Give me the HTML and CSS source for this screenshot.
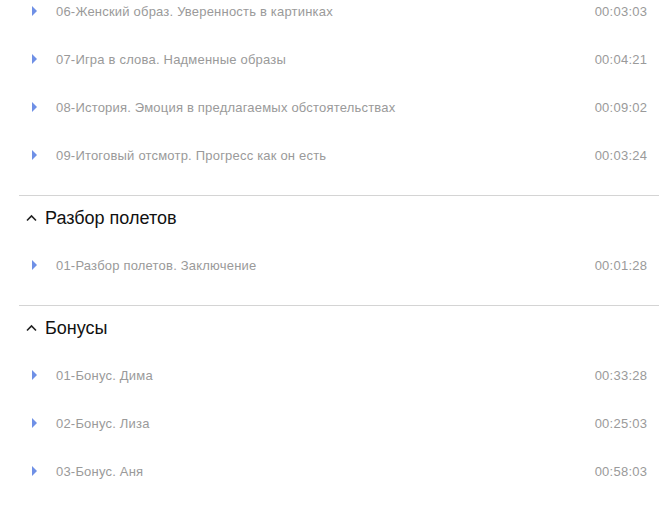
FILE: index.html
```html
<!DOCTYPE html>
<html lang="ru">
<head>
<meta charset="utf-8">
<link rel="stylesheet" href="styles.css">
</head>
<body>
<div class="list">
  <section class="section">
    <div class="row"><span class="play"></span><span class="title">06-Женский образ. Уверенность в картинках</span><span class="time">00:03:03</span></div>
    <div class="row"><span class="play"></span><span class="title">07-Игра в слова. Надменные образы</span><span class="time">00:04:21</span></div>
    <div class="row"><span class="play"></span><span class="title">08-История. Эмоция в предлагаемых обстоятельствах</span><span class="time">00:09:02</span></div>
    <div class="row"><span class="play"></span><span class="title">09-Итоговый отсмотр. Прогресс как он есть</span><span class="time">00:03:24</span></div>
  </section>
  <section class="section">
    <div class="head"><svg class="chev" width="11" height="8" viewBox="0 0 11 8"><path d="M1 6.5 L5.5 2 L10 6.5" fill="none" stroke="#222" stroke-width="1.6"/></svg><span>Разбор полетов</span></div>
    <div class="row"><span class="play"></span><span class="title">01-Разбор полетов. Заключение</span><span class="time">00:01:28</span></div>
  </section>
  <section class="section last">
    <div class="head"><svg class="chev" width="11" height="8" viewBox="0 0 11 8"><path d="M1 6.5 L5.5 2 L10 6.5" fill="none" stroke="#222" stroke-width="1.6"/></svg><span>Бонусы</span></div>
    <div class="row"><span class="play"></span><span class="title">01-Бонус. Дима</span><span class="time">00:33:28</span></div>
    <div class="row"><span class="play"></span><span class="title">02-Бонус. Лиза</span><span class="time">00:25:03</span></div>
    <div class="row"><span class="play"></span><span class="title">03-Бонус. Аня</span><span class="time">00:58:03</span></div>
  </section>
</div>
</body>
</html>
```
FILE: styles.css
```css
html, body {
  margin: 0;
  padding: 0;
  background: #fff;
}
body {
  font-family: "Liberation Sans", Arial, sans-serif;
  overflow: hidden;
}
.list {
  width: 640px;
  margin: -13px 0 0 19px;
}
.section {
  padding-bottom: 16px;
  border-bottom: 1px solid #d4d4d4;
}
.section.last {
  border-bottom: none;
}
.row {
  height: 48px;
  display: flex;
  align-items: center;
  font-size: 13px;
  letter-spacing: 0.2px;
  color: #9a9a9a;
  padding: 0 12px 0 13px;
}
.play {
  width: 0;
  height: 0;
  border-top: 5px solid transparent;
  border-bottom: 5px solid transparent;
  border-left: 5px solid #6f90e6;
  margin-right: 19px;
}
.title {
  flex: 1;
}
.time {
  letter-spacing: 0.25px;
  margin-right: -0.25px;
}
.head {
  height: 45px;
  display: flex;
  align-items: center;
  font-size: 18px;
  color: #111;
  padding-left: 7px;
}
.chev {
  margin-right: 8px;
  margin-top: -2px;
}
```
